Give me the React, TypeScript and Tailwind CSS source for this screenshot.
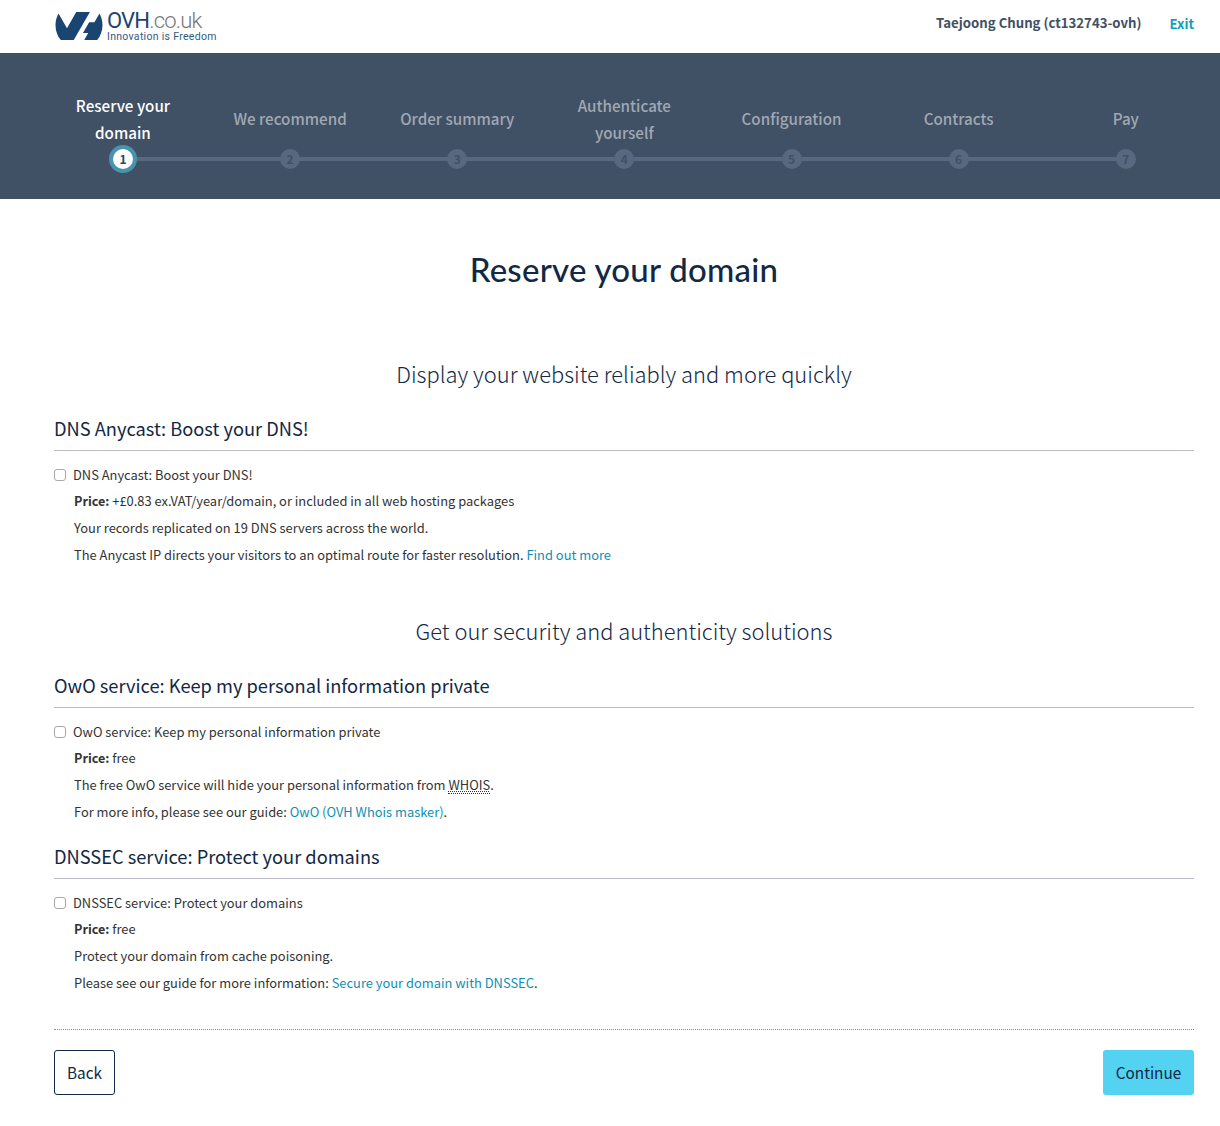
import type { ReactNode } from "react";

const steps = [
  "Reserve your domain",
  "We recommend",
  "Order summary",
  "Authenticate yourself",
  "Configuration",
  "Contracts",
  "Pay",
];

function Logo() {
  return (
    <div className="flex h-[34px] w-[164px] items-start">
      <svg viewBox="0 4.85 24 14.3" className="mt-[3px] h-[28px] w-12 shrink-0" fill="#1b4571">
        <path d="M19.881 10.095l2.563-4.45C23.434 7.389 24 9.404 24 11.555c0 2.88-1.017 5.523-2.71 7.594h-6.62l2.04-3.541h-2.696l3.176-5.513h2.691zm-2.32-5.243L9.333 19.14l.003.009H2.709C1.014 17.077 0 14.435 0 11.555c0-2.152.57-4.17 1.561-5.918L5.855 13.1l4.752-8.248h6.954z" />
      </svg>
      <div className="ml-[4px] flex flex-col whitespace-nowrap pt-px font-['Roboto',sans-serif]">
        <span className="h-[21px] text-[22px] leading-[21px] tracking-[-0.8px] text-[#1b4571]">
          OVH<span className="font-light text-[#777777]">.co.uk</span>
        </span>
        <span className="text-[10.5px] leading-[12px] tracking-[0.3px] text-[#31597f]">Innovation is Freedom</span>
      </div>
    </div>
  );
}

function Header() {
  return (
    <header className="flex h-[53px] items-start justify-between pl-[55px] pr-[26px]">
      <div className="pt-[9px]">
        <Logo />
      </div>
      <div className="flex items-start gap-[28px] pt-[12px] text-[13.2px] font-bold leading-[22px]">
        <span className="text-[#3f5063]">Taejoong Chung (ct132743-ovh)</span>
        <a href="#" className="pt-px text-[#0f9fc0]">Exit</a>
      </div>
    </header>
  );
}

function Step({ label, index }: { label: string; index: number }) {
  const active = index === 0;
  const last = index === steps.length - 1;
  return (
    <li className="relative flex flex-1 flex-col items-center">
      <div className="flex h-[53px] items-center">
        <div
          className={`w-[120px] text-center text-[15.2px] font-medium leading-[27px] ${
            active ? "text-white" : "text-[#a0a8b3]"
          }`}
        >
          {label}
        </div>
      </div>
      {!last && <div className="absolute left-1/2 top-[65px] h-1 w-full bg-[#58687e]" />}
      <div
        className={`relative z-10 mt-[4px] flex size-5 items-center justify-center rounded-full text-[12px] font-bold leading-5 ${
          active ? "bg-white text-[#33435a] ring-4 ring-[#4893ad]" : "bg-[#58687e] text-[#405165]"
        }`}
      >
        {index + 1}
      </div>
    </li>
  );
}

function Price({ children }: { children: ReactNode }) {
  return (
    <p>
      <strong className="text-[12.6px] font-bold">Price:</strong> {children}
    </p>
  );
}

function Link({ children }: { children: ReactNode }) {
  return (
    <a href="#" className="text-[#0f8fb4]">
      {children}
    </a>
  );
}

function Option({ title, children }: { title: string; children: ReactNode }) {
  return (
    <section className="h-[171px]">
      <h3 className="h-[37px] border-b border-[#b9b9c8] text-[18.25px] leading-[28px] text-[#122844]">{title}</h3>
      <label className="mt-[11px] flex h-[25px] items-center text-[12.88px] leading-[25px]">
        <input
          type="checkbox"
          className="mr-[7px] size-3 appearance-none rounded-[3px] border border-[#a9a9a9] bg-white"
        />
        {title}
      </label>
      <div className="pl-5 text-[12.9px] leading-[27px]">{children}</div>
    </section>
  );
}

export default function App() {
  return (
    <div className="h-[1126px] w-[1220px] overflow-hidden bg-white font-['Noto_Sans_CJK_SC',sans-serif] text-[#333333]">
      <Header />
      <nav className="h-[146px] bg-[#405166] pl-[39.4px] pr-[10.6px] pt-[39px]">
        <ol className="flex">
          {steps.map((label, i) => (
            <Step key={label} label={label} index={i} />
          ))}
        </ol>
      </nav>
      <main className="ml-[54px] w-[1140px]">
        <h1 className="pt-[46px] text-center font-['Lato',sans-serif] text-[33px] font-medium leading-[48px] tracking-[0.25px] text-[#122844]">
          Reserve your domain
        </h1>
        <h2 className="mt-[64px] h-[57px] text-center text-[21.9px] font-light leading-[34px] text-[#122844]">
          Display your website reliably and more quickly
        </h2>
        <Option title="DNS Anycast: Boost your DNS!">
          <Price>+£0.83 ex.VAT/year/domain, or included in all web hosting packages</Price>
          <p>Your records replicated on 19 DNS servers across the world.</p>
          <p>
            The Anycast IP directs your visitors to an optimal route for faster resolution. <Link>Find out more</Link>
          </p>
        </Option>
        <h2 className="mt-[29px] h-[57px] text-center text-[21.9px] font-light leading-[34px] text-[#122844]">
          Get our security and authenticity solutions
        </h2>
        <Option title="OwO service: Keep my personal information private">
          <Price>free</Price>
          <p>
            The free OwO service will hide your personal information from{" "}
            <abbr className="inline-block h-[18px] border-b border-dotted border-[#333333] leading-[18px] underline decoration-dotted decoration-1 underline-offset-1">
              WHOIS
            </abbr>
            .
          </p>
          <p>
            For more info, please see our guide: <Link>OwO (OVH Whois masker)</Link>.
          </p>
        </Option>
        <Option title="DNSSEC service: Protect your domains">
          <Price>free</Price>
          <p>Protect your domain from cache poisoning.</p>
          <p>
            Please see our guide for more information: <Link>Secure your domain with DNSSEC</Link>.
          </p>
        </Option>
        <div className="mt-[16px] flex justify-between border-t border-dotted border-[#8c8c8c] pt-5 text-[15.3px] text-[#122844]">
          <button className="h-[45px] w-[61px] rounded-[3px] border border-[#122844] bg-white">Back</button>
          <button className="h-[45px] w-[91px] rounded-[3px] bg-[#54d2f2]">Continue</button>
        </div>
      </main>
    </div>
  );
}
